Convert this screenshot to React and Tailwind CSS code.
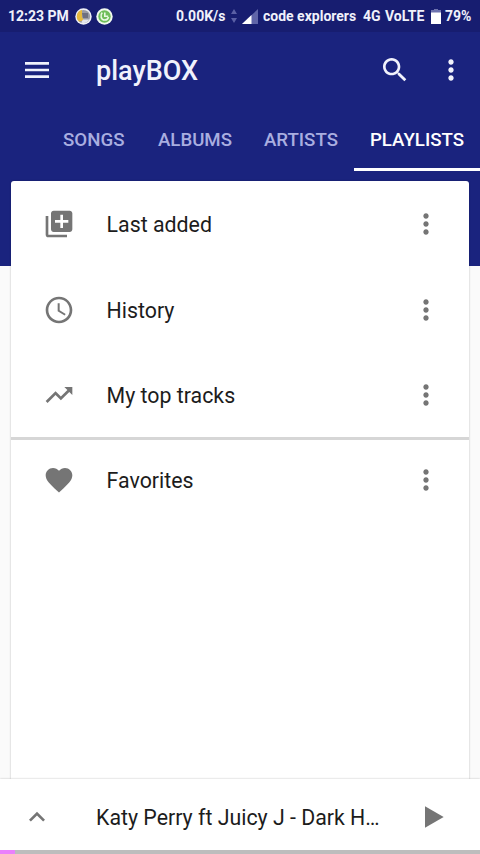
import React from "react";

const paths = {
  menu: "M3 18h18v-2H3v2zm0-5h18v-2H3v2zm0-7v2h18V6H3z",
  search:
    "M15.5 14h-.79l-.28-.27C15.41 12.59 16 11.11 16 9.5 16 5.91 13.09 3 9.5 3S3 5.91 3 9.5 5.91 16 9.5 16c1.61 0 3.09-.59 4.23-1.57l.27.28v.79l5 4.99L20.49 19l-4.99-5zm-6 0C7.01 14 5 11.99 5 9.5S7.01 5 9.5 5 14 7.01 14 9.5 11.99 14 9.5 14z",
  more: "M12 8c1.1 0 2-.9 2-2s-.9-2-2-2-2 .9-2 2 .9 2 2 2zm0 2c-1.1 0-2 .9-2 2s.9 2 2 2 2-.9 2-2-.9-2-2-2zm0 6c-1.1 0-2 .9-2 2s.9 2 2 2 2-.9 2-2-.9-2-2-2z",
  added:
    "M4 6H2v14c0 1.1.9 2 2 2h14v-2H4V6zm16-4H8c-1.1 0-2 .9-2 2v12c0 1.1.9 2 2 2h12c1.1 0 2-.9 2-2V4c0-1.1-.9-2-2-2zm-1 9h-4v4h-2v-4H9V9h4V5h2v4h4v2z",
  history:
    "M11.99 2C6.47 2 2 6.48 2 12s4.47 10 9.99 10C17.52 22 22 17.52 22 12S17.52 2 11.99 2zM12 20c-4.42 0-8-3.58-8-8s3.58-8 8-8 8 3.58 8 8-3.58 8-8 8zm.5-13H11v6l5.25 3.15.75-1.23-4.5-2.67z",
  trending:
    "M16 6l2.29 2.29-4.88 4.88-4-4L2 16.59 3.41 18l6-6 4 4 6.3-6.29L22 12V6z",
  heart:
    "M12 21.35l-1.45-1.32C5.4 15.36 2 12.28 2 8.5 2 5.42 4.42 3 7.5 3c1.74 0 3.41.81 4.5 2.09C13.09 3.81 14.76 3 16.5 3 19.58 3 22 5.42 22 8.5c0 3.78-3.4 6.86-8.55 11.54L12 21.35z",
  up: "M12 8l-6 6 1.41 1.41L12 10.83l4.59 4.58L18 14z",
  play: "M6 4v16l14-8z",
};

const Icon = ({ name, className = "size-8" }) => (
  <svg viewBox="0 0 24 24" fill="currentColor" className={`shrink-0 ${className}`}>
    <path d={paths[name]} />
  </svg>
);

const tabs = ["SONGS", "ALBUMS", "ARTISTS", "PLAYLISTS"];

const autoPlaylists = [
  { icon: "added", label: "Last added" },
  { icon: "history", label: "History" },
  { icon: "trending", label: "My top tracks" },
];

const PlaylistRow = ({ icon, label }) => (
  <div className="flex h-[85.33px] items-center pl-[31.6px] pr-[26.7px] text-[#757575]">
    <Icon name={icon} />
    <span className="ml-8 flex-1 pt-[2px] text-[21.33px] text-[#1c1c1c]">{label}</span>
    <button type="button">
      <Icon name="more" />
    </button>
  </div>
);

const StatusBar = () => (
  <div className="flex h-8 shrink-0 items-center bg-[#171d70] pl-2 pr-2 text-[14px] font-bold whitespace-nowrap text-[#f0f1fb]">
    <span className="w-[62px]">12:23 PM</span>
    <svg viewBox="0 0 17 17" className="ml-[5px] size-[17px]">
      <circle cx="8.5" cy="8.5" r="8.2" fill="#eef0f5" />
      <circle cx="8.5" cy="8.5" r="6.6" fill="#9a9ba4" />
      <path d="M7 2a6.6 6.6 0 0 0-3 11.4l5-1.2-2-3z" fill="#e6b93d" />
      <path d="M7 5h6v5H8z" fill="#6f7080" />
      <path d="M8 11.5h6.2a6.6 6.6 0 0 1-8 3z" fill="#e4e6ee" />
    </svg>
    <svg viewBox="0 0 17 17" className="ml-1 size-[17px]">
      <circle cx="8.5" cy="8.5" r="8.2" fill="#f1faee" />
      <circle cx="8.5" cy="8.5" r="6.2" fill="#6fbe5a" />
      <path
        d="M6.3 4.6C3.8 7 5 12 8.7 12c2 0 3.4-1.3 3.8-3M8.8 4.5v3.7h3.4"
        fill="none"
        stroke="#e8f8e2"
        strokeWidth="1.6"
      />
    </svg>
    <span className="ml-auto w-[49px]">0.00K/s</span>
    <svg viewBox="0 0 6 14" className="ml-[6px] h-[14px] w-[6px]" fill="#5b60a5">
      <path d="M3 0l3 5H0zM3 14l3-5H0z" />
    </svg>
    <svg viewBox="0 0 16 15" className="ml-[5px] h-[15px] w-4">
      <path d="M16 0v15H0z" fill="#6065a8" />
      <path d="M9.5 6v9H0z" fill="#fff" />
    </svg>
    <span className="ml-[5px] w-[94px]">code explorers</span>
    <span className="ml-[6px] w-[17px]">4G</span>
    <span className="ml-[5px] w-10">VoLTE</span>
    <svg viewBox="0 0 10 15" className="ml-[6px] h-[15px] w-[10px]">
      <path d="M3 0h4v1h3v3H0V1h3z" fill="#6e73ae" />
      <path d="M0 3.5h10V15H0z" fill="#fff" />
    </svg>
    <span className="ml-1 w-[27px]">79%</span>
  </div>
);

const App = () => {
  return (
    <div className="flex h-[854px] w-[480px] flex-col overflow-hidden bg-[#fafafa] font-[Roboto,sans-serif]">
      <StatusBar />

      {/* Toolbar and tabs */}
      <header className="h-[234px] shrink-0 bg-[#1a237e] text-[#f1f2fc]">
        <div className="flex h-[75px] items-center pl-[21px]">
          <Icon name="menu" />
          <h1 className="ml-[43px] flex-1 pt-[3px] text-[27px] font-medium">playBOX</h1>
          <Icon name="search" />
          <Icon name="more" className="ml-6 mr-[13.5px] size-8" />
        </div>
        <nav className="flex h-16 justify-end text-[18.67px] font-medium">
          {tabs.map((tab) => (
            <div
              key={tab}
              className={
                tab === "PLAYLISTS"
                  ? "flex items-center border-b-[3px] border-white px-4 pt-[5px] text-white"
                  : "flex items-center px-4 pt-[2px] text-[#a9aee0] first:pr-[17.5px]"
              }
            >
              {tab}
            </div>
          ))}
        </nav>
      </header>

      {/* Cards overlap the lower part of the header */}
      <main className="relative -mt-[85px] mx-[11px] flex flex-1 flex-col rounded-t-[3px] shadow-[0_0_2px_rgba(0,0,0,0.3)]">
        <section className="h-[256px] rounded-t-[3px] bg-white pt-[0.67px]">
          {autoPlaylists.map((item) => (
            <PlaylistRow key={item.label} {...item} />
          ))}
        </section>
        <section className="flex-1 border-t-[3px] border-[#d6d6d6] bg-white">
          <div className="-mt-[3px]">
            <PlaylistRow icon="heart" label="Favorites" />
          </div>
        </section>
      </main>

      {/* Now playing */}
      <footer className="z-10 flex h-[75px] shrink-0 flex-col bg-white shadow-[0_0_2px_rgba(0,0,0,0.25)]">
        <div className="flex flex-1 items-center pt-[4px] pl-[21px] pr-[31px] text-[#757575]">
          <Icon name="up" />
          <span className="ml-[43px] flex-1 pt-[2px] text-[21.33px] text-[#1c1c1c]">
            Katy Perry ft Juicy J - Dark H…
          </span>
          <Icon name="play" />
        </div>
        <div className="h-1 bg-[#bdbdbd]">
          <div className="h-1 w-[15px] bg-[#ea80fc]" />
        </div>
      </footer>
    </div>
  );
};

export default App;
